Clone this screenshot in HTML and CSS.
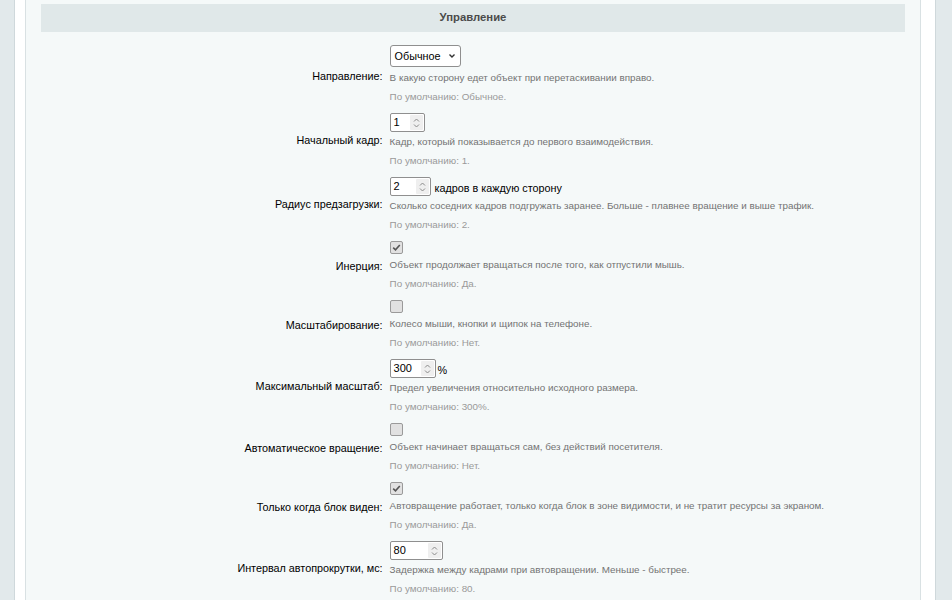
FILE: index.html
```html
<!DOCTYPE html>
<html lang="ru">
<head>
<meta charset="utf-8">
<title>Управление</title>
<link rel="stylesheet" href="styles.css">
</head>
<body>
<div class="frame">
  <div class="panel">
    <div class="heading">Управление</div>
    <div class="form">

      <div class="label">Направление:</div>
      <div class="value">
        <div class="ctl ctl-tall">
          <div class="select">Обычное
            <svg class="chev" width="8" height="6" viewBox="0 0 8 6"><path d="M1.5 1.5 L4 4 L6.5 1.5" fill="none" stroke="#333" stroke-width="1.4"/></svg>
          </div>
        </div>
        <div class="desc">В какую сторону едет объект при перетаскивании вправо.</div>
        <div class="def">По умолчанию: Обычное.</div>
      </div>

      <div class="label">Начальный кадр:</div>
      <div class="value">
        <div class="ctl ctl-tall">
          <div class="num w35"><span class="num-val">1</span><span class="spin"><svg width="7" height="12" viewBox="0 0 7 12"><path d="M1 4.5 L3.5 2 L6 4.5 M1 7.5 L3.5 10 L6 7.5" fill="none" stroke="#8a8a8a" stroke-width="1"/></svg></span></div>
        </div>
        <div class="desc">Кадр, который показывается до первого взаимодействия.</div>
        <div class="def">По умолчанию: 1.</div>
      </div>

      <div class="label">Радиус предзагрузки:</div>
      <div class="value">
        <div class="ctl ctl-tall">
          <div class="num w41"><span class="num-val">2</span><span class="spin"><svg width="7" height="12" viewBox="0 0 7 12"><path d="M1 4.5 L3.5 2 L6 4.5 M1 7.5 L3.5 10 L6 7.5" fill="none" stroke="#8a8a8a" stroke-width="1"/></svg></span></div>
          <span class="suffix">кадров в каждую сторону</span>
        </div>
        <div class="desc">Сколько соседних кадров подгружать заранее. Больше - плавнее вращение и выше трафик.</div>
        <div class="def">По умолчанию: 2.</div>
      </div>

      <div class="label">Инерция:</div>
      <div class="value">
        <div class="ctl">
          <span class="cb"><svg width="11" height="11" viewBox="0 0 11 11"><path d="M2.2 5.6 L4.5 7.8 L8.8 3" fill="none" stroke="#555" stroke-width="1.6"/></svg></span>
        </div>
        <div class="desc">Объект продолжает вращаться после того, как отпустили мышь.</div>
        <div class="def">По умолчанию: Да.</div>
      </div>

      <div class="label">Масштабирование:</div>
      <div class="value">
        <div class="ctl"><span class="cb"></span></div>
        <div class="desc">Колесо мыши, кнопки и щипок на телефоне.</div>
        <div class="def">По умолчанию: Нет.</div>
      </div>

      <div class="label">Максимальный масштаб:</div>
      <div class="value">
        <div class="ctl ctl-tall">
          <div class="num w46"><span class="num-val">300</span><span class="spin"><svg width="7" height="12" viewBox="0 0 7 12"><path d="M1 4.5 L3.5 2 L6 4.5 M1 7.5 L3.5 10 L6 7.5" fill="none" stroke="#8a8a8a" stroke-width="1"/></svg></span></div>
          <span class="suffix tight">%</span>
        </div>
        <div class="desc">Предел увеличения относительно исходного размера.</div>
        <div class="def">По умолчанию: 300%.</div>
      </div>

      <div class="label">Автоматическое вращение:</div>
      <div class="value">
        <div class="ctl"><span class="cb"></span></div>
        <div class="desc">Объект начинает вращаться сам, без действий посетителя.</div>
        <div class="def">По умолчанию: Нет.</div>
      </div>

      <div class="label">Только когда блок виден:</div>
      <div class="value">
        <div class="ctl">
          <span class="cb"><svg width="11" height="11" viewBox="0 0 11 11"><path d="M2.2 5.6 L4.5 7.8 L8.8 3" fill="none" stroke="#555" stroke-width="1.6"/></svg></span>
        </div>
        <div class="desc">Автовращение работает, только когда блок в зоне видимости, и не тратит ресурсы за экраном.</div>
        <div class="def">По умолчанию: Да.</div>
      </div>

      <div class="label">Интервал автопрокрутки, мс:</div>
      <div class="value">
        <div class="ctl ctl-tall">
          <div class="num w53"><span class="num-val">80</span><span class="spin"><svg width="7" height="12" viewBox="0 0 7 12"><path d="M1 4.5 L3.5 2 L6 4.5 M1 7.5 L3.5 10 L6 7.5" fill="none" stroke="#8a8a8a" stroke-width="1"/></svg></span></div>
        </div>
        <div class="desc">Задержка между кадрами при автовращении. Меньше - быстрее.</div>
        <div class="def">По умолчанию: 80.</div>
      </div>

    </div>
  </div>
</div>
</body>
</html>
```
FILE: styles.css
```css
html, body {
  margin: 0;
  padding: 0;
}
body {
  background: #e2e9eb;
  font-family: "Liberation Sans", Arial, sans-serif;
  color: #000;
  height: 600px;
  overflow: hidden;
}
.frame {
  margin: 0 16px 0 14px;
  border-left: 1px solid #cfd8db;
  border-right: 1px solid #cfd8db;
  background: #ffffff;
  padding: 0 14px 0 10px;
  min-height: 600px;
}
.panel {
  background: #f5f9f9;
  border-left: 1px solid #d9e1e3;
  border-right: 1px solid #d9e1e3;
  padding: 4px 15px 0;
  min-height: 596px;
}
.heading {
  background: #e0e8e9;
  height: 28px;
  line-height: 27px;
  text-align: center;
  font-weight: bold;
  font-size: 11.3px;
  color: #4b4b4b;
  margin-bottom: 10px;
}
.form {
  display: grid;
  grid-template-columns: 40% 60%;
}
.label {
  display: flex;
  align-items: center;
  justify-content: flex-end;
  padding: 4px 4px 0 0;
  font-size: 10.8px;
  color: #000;
}
.value {
  padding: 2px 0 2px 3px;
}
.ctl {
  height: 20px;
  display: flex;
  align-items: flex-end;
}
.ctl-tall {
  height: 25px;
}
.desc {
  margin-top: 2px;
  font-size: 9.85px;
  line-height: 14px;
  color: #737373;
}
.def {
  margin-top: 5px;
  font-size: 9.85px;
  line-height: 14px;
  color: #9a9a9a;
}
.select {
  box-sizing: border-box;
  width: 71px;
  height: 22px;
  margin-bottom: 2px;
  border: 1px solid #8f8f8f;
  border-radius: 3px;
  background: #fff;
  font-size: 10.8px;
  display: flex;
  align-items: center;
  justify-content: space-between;
  padding: 0 4px 0 4px;
}
.chev {
  display: block;
}
.num {
  box-sizing: border-box;
  height: 19px;
  margin-bottom: 1px;
  border: 1px solid #8f8f8f;
  border-radius: 2px;
  background: #fff;
  display: flex;
  align-items: center;
  justify-content: space-between;
  padding: 0 1px 0 3px;
  font-size: 11px;
}
.w35 { width: 35px; }
.w41 { width: 41px; }
.w46 { width: 46px; }
.w53 { width: 53px; }
.num-val {
  line-height: 15px;
}
.spin {
  width: 13px;
  height: 15px;
  background: #efefef;
  border-radius: 1px;
  display: flex;
  align-items: center;
  justify-content: center;
}
.spin svg {
  display: block;
}
.suffix {
  font-size: 10.8px;
  margin: 0 0 3px 4px;
}
.suffix.tight {
  margin-left: 2px;
}
.cb {
  box-sizing: border-box;
  width: 13px;
  height: 13px;
  margin-bottom: 2px;
  border: 1px solid #9a9a9a;
  border-radius: 2px;
  background: #e1e1e1;
  display: flex;
  align-items: center;
  justify-content: center;
}
.cb svg {
  display: block;
}
```
